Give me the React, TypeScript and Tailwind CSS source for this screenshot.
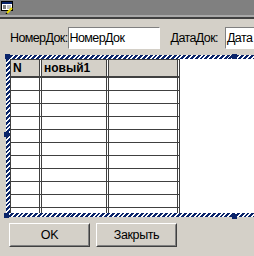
import React from "react";

const HATCH =
  "bg-[repeating-linear-gradient(135deg,#0a246a_0px,#0a246a_2px,#ffffff_2px,#ffffff_3.4px)]";

function FormIcon() {
  return (
    <svg width="13" height="13" viewBox="0 0 13 13" className="block">
      <rect x="0.5" y="0.5" width="11" height="9" fill="#fff" stroke="#000" />
      <rect x="1" y="1" width="10" height="2" fill="#0a246a" />
      <line x1="2" y1="5" x2="5" y2="5" stroke="#000" />
      <line x1="6" y1="5" x2="10" y2="5" stroke="#808080" />
      <line x1="2" y1="7" x2="5" y2="7" stroke="#000" />
      <line x1="6" y1="7" x2="10" y2="7" stroke="#808080" />
      <line x1="6" y1="12" x2="11" y2="7" stroke="#e8d800" strokeWidth="2" />
      <line x1="5" y1="13" x2="6" y2="12" stroke="#000" strokeWidth="1.5" />
    </svg>
  );
}

function Cell({ w, children, head }: { w: string; children?: React.ReactNode; head?: boolean }) {
  return (
    <div
      className={`${w} h-full border-x border-[#404040] shrink-0 px-[2px] flex items-center ${
        head ? "bg-[#d4d0c8] font-bold" : ""
      }`}
    >
      {children}
    </div>
  );
}

function GridRow({ head, cells }: { head?: boolean; cells: string[] }) {
  return (
    <div
      className={`flex w-[170px] ${
        head ? "h-[19px] border-t border-b-2" : "h-[13px] border-b"
      } border-[#404040]`}
    >
      <Cell w="w-[30px]" head={head}>{cells[0]}</Cell>
      <div className="w-[1px] shrink-0" />
      <Cell w="w-[66px]" head={head}>{cells[1]}</Cell>
      <div className="w-[1px] shrink-0" />
      <Cell w="w-[70px]" head={head}>{cells[2]}</Cell>
      <div className="w-[1px] shrink-0" />
      <div className="w-[1px] h-full bg-[#404040] shrink-0" />
    </div>
  );
}

function Button({ label }: { label: string }) {
  return (
    <div className="w-[81px] h-[24px] border border-t-white border-l-white border-r-[#404040] border-b-[#404040]">
      <div className="w-full h-full border border-transparent border-r-[#808080] border-b-[#808080] flex items-center justify-center text-[12.5px] tracking-[-0.4px] text-black">
        {label}
      </div>
    </div>
  );
}

function Handle({ pos }: { pos: string }) {
  return <div className={`absolute w-[5px] h-[5px] bg-[#0a246a] ${pos}`} />;
}

export default function App() {
  const rows = Array.from({ length: 11 }, (_, i) => i);
  return (
    <div className="w-[254px] h-[256px] overflow-hidden bg-[#d4d0c8] font-['Liberation_Sans',Arial,sans-serif] text-black">
      <div className="h-[15px] bg-[#808080] pl-[1px] pt-[1px]">
        <FormIcon />
      </div>
      <div className="h-[2px] bg-[#a8a8a8]" />
      <div className="h-[2px] bg-[#404040]" />

      <div className="flex items-center h-[22px] mt-[8px] pl-[10px] text-[12.5px] tracking-[-0.6px] whitespace-nowrap">
        <span className="shrink-0">НомерДок:</span>
        <div className="w-[92px] h-[22px] shrink-0 bg-white border border-t-[#808080] border-l-[#808080] border-r-white border-b-white flex items-center pl-[1px]">
          НомерДок
        </div>
        <span className="ml-[11px] shrink-0">ДатаДок:</span>
        <div className="w-[40px] h-[22px] ml-[7px] shrink-0 bg-white border border-t-[#808080] border-l-[#808080] border-r-white border-b-white flex items-center pl-[1px] overflow-hidden">
          Дата
        </div>
      </div>

      <div className={`relative mt-[6px] ml-[6px] w-[248px] h-[162px] pl-[4px] py-[4px] ${HATCH}`}>
        <div className="w-full h-full bg-white overflow-hidden text-[12px]">
          <GridRow head cells={["N", "новый1", ""]} />
          {rows.map((r) => (
            <GridRow key={r} cells={["", "", ""]} />
          ))}
        </div>
        <Handle pos="left-[-1px] top-[-1px]" />
        <Handle pos="left-[226px] top-[-1px]" />
        <Handle pos="left-[-2px] top-[77px]" />
        <Handle pos="left-[-2px] top-[158px]" />
        <Handle pos="left-[226px] top-[159px]" />
      </div>

      <div className="flex gap-[6px] mt-[6px] ml-[9px]">
        <Button label="OK" />
        <Button label="Закрыть" />
      </div>
    </div>
  );
}
